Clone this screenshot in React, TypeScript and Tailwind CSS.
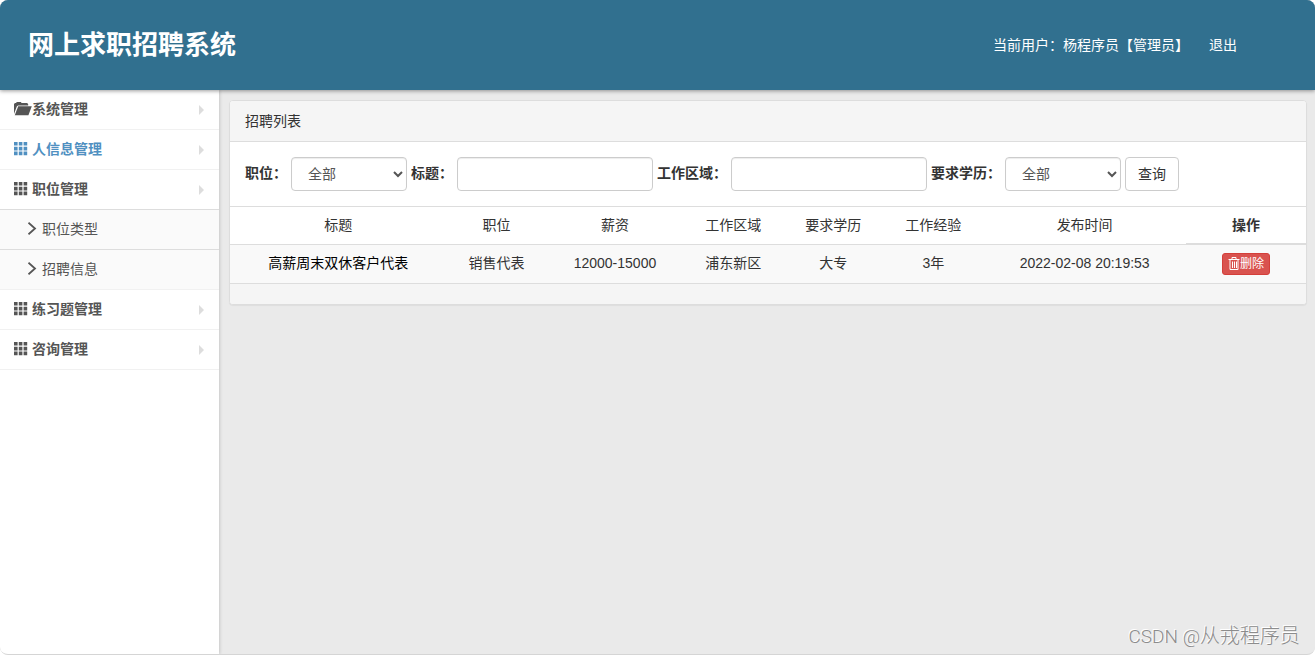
import { FormEvent, useState } from 'react';

type SubItem = { title: string };
type MenuItem = {
    title: string
    icon: 'folder' | 'grid'
    active?: boolean
    children?: SubItem[]
};

type Job = {
    id: number
    title: string
    position: string
    salary: string
    area: string
    education: string
    experience: string
    publishedAt: string
};

const menu: MenuItem[] = [
    {title: '系统管理', icon: 'folder'},
    {title: '人信息管理', icon: 'grid', active: true},
    {title: '职位管理', icon: 'grid', children: [{title: '职位类型'}, {title: '招聘信息'}]},
    {title: '练习题管理', icon: 'grid'},
    {title: '咨询管理', icon: 'grid'},
];

const initialJobs: Job[] = [
    {
        id: 1,
        title: '高薪周末双休客户代表',
        position: '销售代表',
        salary: '12000-15000',
        area: '浦东新区',
        education: '大专',
        experience: '3年',
        publishedAt: '2022-02-08 20:19:53',
    },
];

const columns = ['标题', '职位', '薪资', '工作区域', '要求学历', '工作经验', '发布时间'];

function FolderIcon() {
    return (
        <svg viewBox="0 0 18 14" className="h-3.5 w-[18px] shrink-0" fill="currentColor" aria-hidden="true">
            <path d="M0 12V2L1 1H2L2.8 0H6.8L7.6 1H13.2L14.2 2.2V3.4H4L2.8 4.4Z"/>
            <path d="M4.2 4.2H17.8L14.4 13.2H0.8Z"/>
        </svg>
    )
}

function GridIcon() {
    return (
        <svg viewBox="0 0 14 14" className="h-3.5 w-3.5 shrink-0" fill="currentColor" aria-hidden="true">
            <path d="M0 0h3.6v3.6H0zM4.8 0h3.6v3.6H4.8zM9.6 0h3.6v3.6H9.6zM0 4.8h3.6v3.6H0zM4.8 4.8h3.6v3.6H4.8zM9.6 4.8h3.6v3.6H9.6zM0 9.6h3.6v3.6H0zM4.8 9.6h3.6v3.6H4.8zM9.6 9.6h3.6v3.6H9.6z"/>
        </svg>
    )
}

function CaretIcon() {
    return (
        <svg viewBox="0 0 5 10" className="h-2.5 w-[5px]" fill="#dddddd" aria-hidden="true">
            <path d="M0 0L5 5L0 10Z"/>
        </svg>
    )
}

function ChevronIcon() {
    return (
        <svg viewBox="0 0 10 14" className="h-3.5 w-2.5" fill="none" stroke="currentColor" strokeWidth="1.8" aria-hidden="true">
            <path d="M0.5 0.8L7 6.5L0.5 12.2"/>
        </svg>
    )
}

function TrashIcon() {
    return (
        <svg viewBox="0 0 12 14" className="h-3.5 w-3" fill="none" stroke="currentColor" aria-hidden="true">
            <path d="M0.5 2.5H11.5M4 2.5V0.5H8V2.5M2 3V12.5H10V3M4.5 4.5V11M6.5 4.5V11M8.5 4.5V11"/>
        </svg>
    )
}

function Header() {
    return (
        <header className="relative z-10 flex h-[90px] items-center justify-between bg-[#31708f] pl-7 pr-[78px] text-white shadow-[0_1px_4px_rgba(0,0,0,0.4)]">
            <h1 className="pt-0.5 text-[26px] font-bold">网上求职招聘系统</h1>
            <div className="flex items-center gap-5">
                <span>当前用户：杨程序员【管理员】</span>
                <a href="#logout">退出</a>
            </div>
        </header>
    )
}

function Sidebar() {
    return (
        <nav className="w-[219px] shrink-0 bg-white text-[#555] shadow-[1px_0_3px_rgba(0,0,0,0.15)]">
            <ul>
                {menu.map((item) => (
                    <li key={item.title}>
                        <a href="#menu"
                           className={`flex h-10 items-center border-b pl-3.5 pr-[15px] font-bold ${item.children ? 'border-[#ddd]' : 'border-[#f1f1f1]'} ${item.active ? 'text-[#5090c1]' : ''}`}>
                            <span className="flex grow items-center pb-0.5">
                                <span className="flex w-[18px]">
                                    {item.icon === 'folder' ? <FolderIcon/> : <GridIcon/>}
                                </span>
                                {item.title}
                            </span>
                            <CaretIcon/>
                        </a>
                        {item.children && (
                            <ul className="divide-y divide-[#ddd] border-b border-[#f1f1f1] bg-[#fafafa]">
                                {item.children.map((child) => (
                                    <li key={child.title}>
                                        <a href="#submenu" className="flex h-[39px] items-center gap-1 pb-0.5 pl-7">
                                            <ChevronIcon/>
                                            {child.title}
                                        </a>
                                    </li>
                                ))}
                            </ul>
                        )}
                    </li>
                ))}
            </ul>
        </nav>
    )
}

const control = 'h-[34px] rounded border border-[#ccc] bg-white px-3 text-[#555] shadow-[inset_0_1px_1px_rgba(0,0,0,0.075)]';

function SearchForm() {
    const [title, setTitle] = useState('')
    const [area, setArea] = useState('')

    function submit(e: FormEvent) {
        e.preventDefault();
    }

    return (
        <form onSubmit={submit} className="flex flex-wrap items-center gap-1 p-[15px]">
            <label htmlFor="position" className="pb-0.5 font-bold">职位：</label>
            <select id="position" className={`${control} w-[116px]`}>
                <option value="">全部</option>
                <option value="sales">销售代表</option>
            </select>
            <label htmlFor="title" className="pb-0.5 font-bold">标题：</label>
            <input id="title" type="text" value={title} onChange={(e) => setTitle(e.target.value)}
                   className={`${control} w-[196px]`}/>
            <label htmlFor="area" className="pb-0.5 font-bold">工作区域：</label>
            <input id="area" type="text" value={area} onChange={(e) => setArea(e.target.value)}
                   className={`${control} w-[196px]`}/>
            <label htmlFor="education" className="pb-0.5 font-bold">要求学历：</label>
            <select id="education" className={`${control} w-[116px]`}>
                <option value="">全部</option>
                <option value="college">大专</option>
            </select>
            <button type="submit" className="h-[34px] rounded border border-[#ccc] bg-white px-3">
                查询
            </button>
        </form>
    )
}

function JobTable() {
    const [jobs, setJobs] = useState(initialJobs)

    return (
        <table className="w-full border-collapse text-center">
            <thead>
                <tr>
                    {columns.map((column) => (
                        <th key={column} className="border-t border-[#ddd] px-2 py-2 font-normal">{column}</th>
                    ))}
                    <th className="w-[120px] border-b-2 border-t border-[#ddd] px-2 py-2">操作</th>
                </tr>
            </thead>
            <tbody>
                {jobs.map((job) => (
                    <tr key={job.id} className="border-y border-[#ddd] bg-[#f9f9f9]">
                        <td className="px-2 pb-[9px] pt-[7px] text-black">{job.title}</td>
                        <td className="px-2 pb-[9px] pt-[7px]">{job.position}</td>
                        <td className="px-2 pb-[9px] pt-[7px]">{job.salary}</td>
                        <td className="px-2 pb-[9px] pt-[7px]">{job.area}</td>
                        <td className="px-2 pb-[9px] pt-[7px]">{job.education}</td>
                        <td className="px-2 pb-[9px] pt-[7px]">{job.experience}</td>
                        <td className="px-2 pb-[9px] pt-[7px]">{job.publishedAt}</td>
                        <td className="px-2 py-2">
                            <button type="button"
                                    onClick={() => setJobs(jobs.filter((j) => j.id !== job.id))}
                                    className="mx-auto flex h-[22px] items-center rounded-[3px] border border-[#d43f3a] bg-[#d9534f] px-[5px] text-xs text-white">
                                <TrashIcon/>
                                删除
                            </button>
                        </td>
                    </tr>
                ))}
            </tbody>
        </table>
    )
}

export default function App() {
    return (
        <div className="bg-white">
            <div className="relative flex min-h-screen flex-col overflow-hidden rounded-lg border-b border-[#d5d5d5] bg-[#eaeaea] font-['Liberation_Sans','Noto_Sans_CJK_SC',sans-serif] text-sm text-[#333]">
                <Header/>
                <div className="flex grow">
                    <Sidebar/>
                    <main className="grow py-2.5 pl-2.5 pr-2">
                        <section className="overflow-hidden rounded border border-[#ddd] bg-white shadow-[0_1px_1px_rgba(0,0,0,0.05)]">
                            <h2 className="border-b border-[#ddd] bg-[#f5f5f5] px-[15px] py-2.5">招聘列表</h2>
                            <SearchForm/>
                            <JobTable/>
                            <div className="h-5 bg-[#f5f5f5]"/>
                        </section>
                    </main>
                </div>
                <p className="absolute bottom-[3px] right-[15px] font-['Roboto','Noto_Sans_CJK_SC',sans-serif] text-xl font-light text-[#8c8c8c] [text-shadow:-1px_-1px_0_#fff]">
                    <span className="text-[19px]">CSDN @</span>从戎程序员
                </p>
            </div>
        </div>
    )
}
